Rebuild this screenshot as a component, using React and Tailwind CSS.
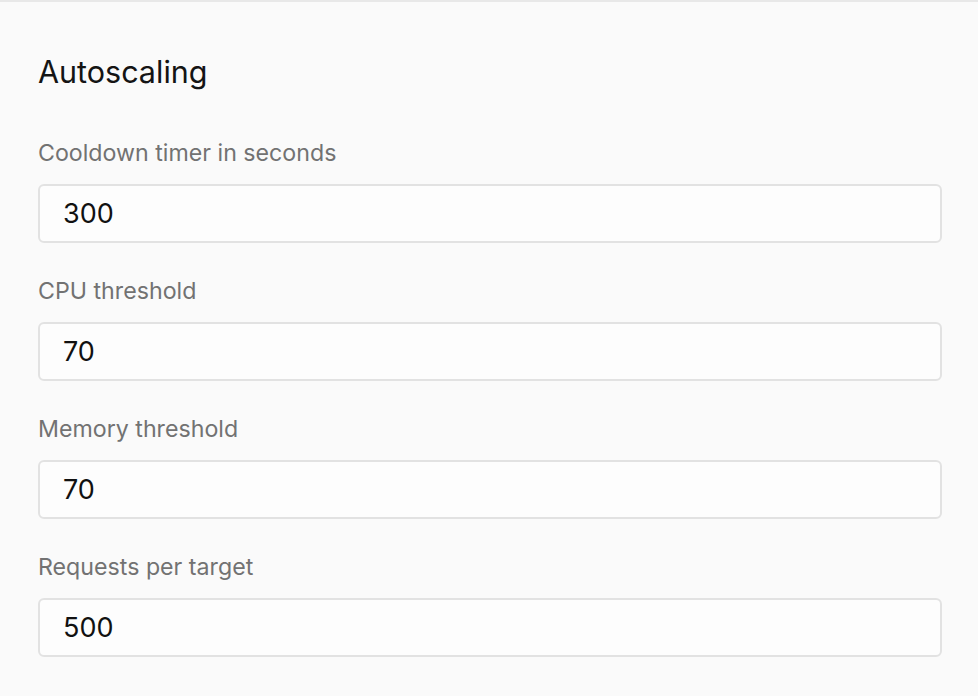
const fields = [
  { label: 'Cooldown timer in seconds', value: '300' },
  { label: 'CPU threshold', value: '70' },
  { label: 'Memory threshold', value: '70' },
  { label: 'Requests per target', value: '500' },
]

export default function App() {
  return (
    <div
      className="min-h-screen bg-[#fafafa] border-t-2 border-[#e8e8e8] pl-[38px] pr-[36px] pt-[52px]"
      style={{ fontFamily: 'Inter, "Liberation Sans", sans-serif' }}
    >
      <h2 className="text-[30.5px] leading-[36px] text-[#141414]">Autoscaling</h2>

      <div className="mt-[48px] flex flex-col gap-[33px]">
        {fields.map((f) => (
          <div key={f.label}>
            <label className="block text-[23.2px] leading-[30px] text-[#727272]">
              {f.label}
            </label>
            <input
              type="text"
              defaultValue={f.value}
              className="mt-[16px] block w-full h-[59px] px-[23px] rounded-[6px] border-2 border-[#e2e2e2] bg-[#fdfdfd] text-[27px] text-[#111] outline-none"
              style={{ fontFamily: 'Inter, "Liberation Sans", sans-serif' }}
            />
          </div>
        ))}
      </div>
    </div>
  )
}
